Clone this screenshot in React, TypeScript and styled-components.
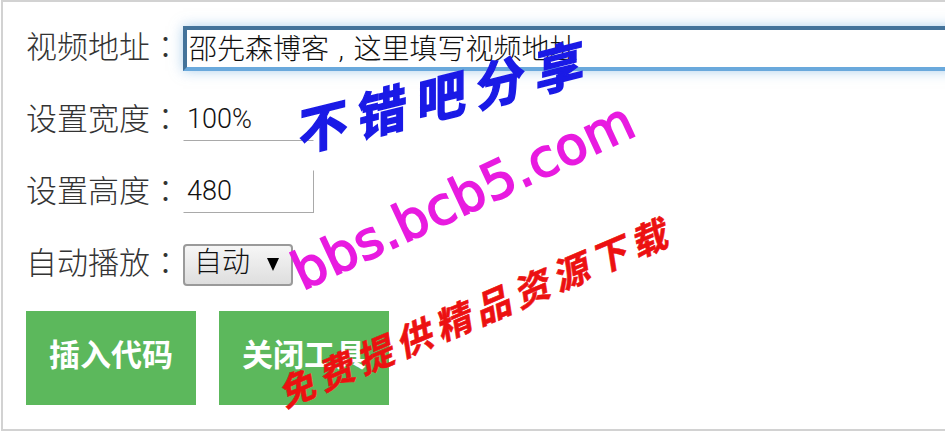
import React from "react";
import styled, { createGlobalStyle } from "styled-components";

const GlobalStyle = createGlobalStyle`
  html, body {
    margin: 0;
    padding: 0;
    height: 442px;
    overflow: hidden;
    background: #fff;
    font-family: "Liberation Sans", "Noto Sans CJK SC", sans-serif;
  }
`;

const Page = styled.div`
  position: relative;
  width: 945px;
  height: 442px;
  overflow: hidden;
`;

const Panel = styled.form`
  box-sizing: border-box;
  width: 1000px;
  height: 431px;
  margin-left: 1px;
  padding: 24px 0 0 23px;
  border: 2px solid #d2d2d2;
  display: flex;
  flex-direction: column;
`;

const Row = styled.div`
  display: flex;
  align-items: flex-start;
  height: 45px;
  margin-bottom: 27px;
`;

const Label = styled.label`
  width: 157px;
  flex: none;
  font-size: 31px;
  font-weight: 300;
  line-height: 38px;
  color: #333;
  white-space: nowrap;
`;

// fullwidth punctuation sits in the middle of its cell in the reference
const Punct = styled.span`
  font-family: "Noto Sans CJK KR", sans-serif;
`;

const TextInput = styled.input<{ $focused?: boolean; $noRight?: boolean }>`
  box-sizing: border-box;
  height: ${(p) => (p.$focused ? "45px" : "43px")};
  width: ${(p) => (p.$focused ? "790px" : "131px")};
  padding: ${(p) => (p.$focused ? "0 2px 4px" : "0 3px 2px")};
  outline: none;
  font-family: "Roboto", "Noto Sans CJK SC", sans-serif;
  font-size: ${(p) => (p.$focused ? "28px" : "27px")};
  font-weight: 300;
  color: #111;
  background: #fff;
  border-style: solid;
  border-width: ${(p) => (p.$focused ? "4px" : "1px")};
  border-color: ${(p) =>
    p.$focused
      ? "#44739a #6aa9dc #6aa9dc #44739a"
      : `#fff ${p.$noRight ? "#fff" : "#a9a9a9"} #a9a9a9 #fff`};
  box-shadow: ${(p) => (p.$focused ? "0 0 12px rgba(106, 169, 220, 0.55)" : "none")};
`;

const Select = styled.select`
  box-sizing: border-box;
  appearance: none;
  width: 110px;
  height: 42px;
  padding: 0 0 5px 9px;
  border: 2px solid #9a9a9a;
  border-radius: 4px;
  outline: none;
  background: linear-gradient(#f6f6f6, #dedede);
  font-family: "Liberation Sans", "Noto Sans CJK SC", sans-serif;
  font-size: 28px;
  font-weight: 300;
  color: #111;
`;

const SelectWrap = styled.span`
  position: relative;
  display: inline-flex;
  margin-top: 2px;
`;

const Caret = styled.span`
  position: absolute;
  right: 14px;
  top: 14px;
  width: 0;
  height: 0;
  border-left: 6px solid transparent;
  border-right: 6px solid transparent;
  border-top: 13px solid #000;
  pointer-events: none;
`;

const Actions = styled.div`
  display: flex;
  gap: 23px;
  margin-top: -3px;
`;

const ActionButton = styled.button`
  width: 170px;
  height: 94px;
  border: 0;
  padding: 0 0 12px;
  background: #5cb85c;
  color: #fff;
  font-family: "Liberation Sans", "Noto Sans CJK SC", sans-serif;
  font-size: 31px;
  font-weight: 700;
`;

const Watermark = styled.div<{ $color: string; $left: number; $top: number; $angle: number; $size: number; $spacing: number; $stroke: number; $skew?: number; $latin?: boolean }>`
  position: absolute;
  left: ${(p) => p.$left}px;
  top: ${(p) => p.$top}px;
  color: ${(p) => p.$color};
  font-family: ${(p) =>
    p.$latin ? `"DejaVu Sans", sans-serif` : `"Noto Sans CJK SC", sans-serif`};
  font-size: ${(p) => p.$size}px;
  font-weight: ${(p) => (p.$latin ? 400 : 700)};
  line-height: 1;
  letter-spacing: ${(p) => p.$spacing}px;
  white-space: nowrap;
  -webkit-text-stroke: ${(p) => p.$stroke}px ${(p) => p.$color};
  transform-origin: left bottom;
  transform: rotate(${(p) => p.$angle}deg) skewX(${(p) => p.$skew ?? 0}deg);
  pointer-events: none;
`;

export default function App() {
  return (
    <Page>
      <GlobalStyle />
      <Panel>
        <Row>
          <Label>视频地址<Punct>：</Punct></Label>
          <TextInput $focused defaultValue={"邵先森博客\u2004,\u2004这里填写视频地址"} />
        </Row>
        <Row>
          <Label>设置宽度<Punct>：</Punct></Label>
          <TextInput $noRight defaultValue="100%" />
        </Row>
        <Row>
          <Label>设置高度<Punct>：</Punct></Label>
          <TextInput defaultValue="480" />
        </Row>
        <Row>
          <Label>自动播放<Punct>：</Punct></Label>
          <SelectWrap>
            <Select defaultValue="auto">
              <option value="auto">自动</option>
              <option value="off">手动</option>
            </Select>
            <Caret />
          </SelectWrap>
        </Row>
        <Actions>
          <ActionButton type="button">插入代码</ActionButton>
          <ActionButton type="button">关闭工具</ActionButton>
        </Actions>
      </Panel>
      <Watermark $color="#1a1ae6" $left={299} $top={105} $angle={-14} $size={50} $spacing={11} $stroke={1.5} $skew={-14}>
        不错吧分享
      </Watermark>
      <Watermark $color="#e81be0" $left={306} $top={246} $angle={-25} $size={52} $spacing={0.5} $stroke={1.8} $latin>
        bbs.bcb5.com
      </Watermark>
      <Watermark $color="#ec1111" $left={285} $top={374} $angle={-23} $size={36} $spacing={6.5} $stroke={0.6} $skew={-14}>
        免费提供精品资源下载
      </Watermark>
    </Page>
  );
}
